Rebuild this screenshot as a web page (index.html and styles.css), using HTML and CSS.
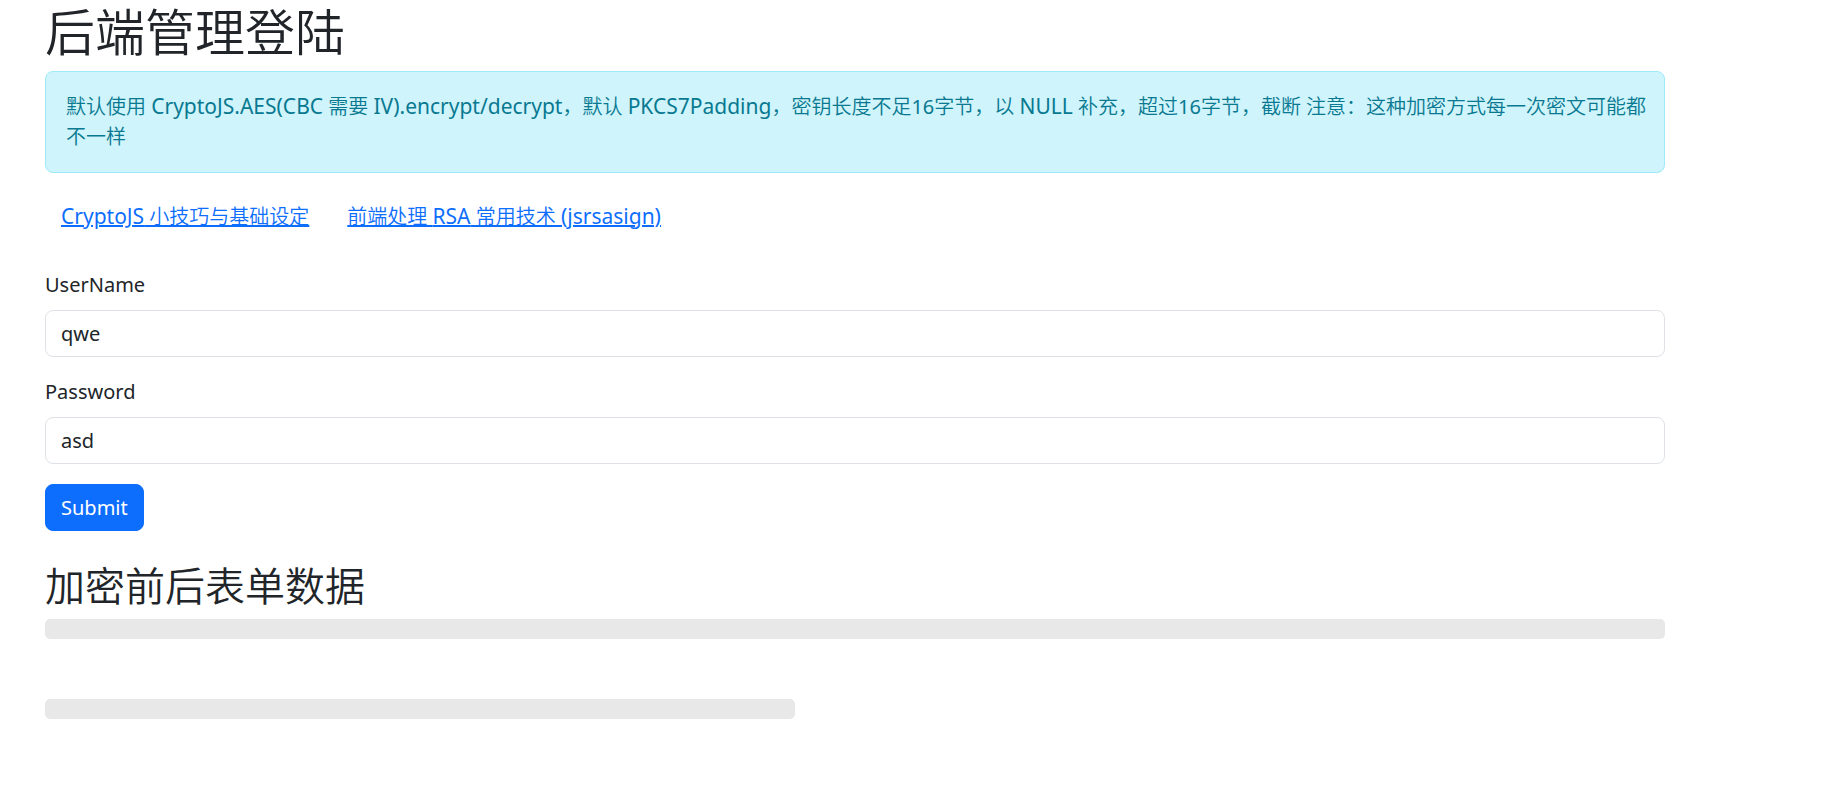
FILE: index.html
```html
<!DOCTYPE html>
<html lang="zh-CN">
<head>
<meta charset="utf-8">
<meta name="viewport" content="width=device-width, initial-scale=1">
<title>后端管理登陆</title>
<link rel="stylesheet" href="styles.css">
</head>
<body>
<main class="container">
  <h1 class="title">后端管理登陆</h1>
  <div class="alert" role="alert">默认使用 <span class="latin">CryptoJS.AES(CBC</span> 需要 <span class="latin">IV).encrypt/decrypt</span>，默认 <span class="latin">PKCS7Padding</span>，密钥长度不足16字节，以 <span class="latin">NULL</span> 补充，超过16字节，截断 注意：这种加密方式每一次密文可能都不一样</div>
  <nav class="links">
    <a class="btn-link" href="#cryptojs"><span class="latin">CryptoJS</span> 小技巧与基础设定</a>
    <a class="btn-link" href="#jsrsasign">前端处理 <span class="latin">RSA</span> 常用技术 <span class="latin">(jsrsasign)</span></a>
  </nav>
  <form class="form">
    <div class="field">
      <label class="label" for="username">UserName</label>
      <input class="control" id="username" type="text" value="qwe">
    </div>
    <div class="field">
      <label class="label" for="password">Password</label>
      <input class="control" id="password" type="text" value="asd">
    </div>
    <button class="btn" type="submit">Submit</button>
  </form>
  <h2 class="subtitle">加密前后表单数据</h2>
  <div class="code"></div>
  <div class="code code-short"></div>
</main>
</body>
</html>
```

FILE: styles.css
```css
*, *::before, *::after {
  box-sizing: border-box;
}

body {
  margin: 0;
  background: #fff;
  color: #212529;
  font-family: "Noto Sans", "Noto Sans CJK SC DemiLight", "Noto Sans CJK SC", sans-serif;
  font-size: 20px;
  line-height: 30px;
}

.container {
  max-width: 1680px;
  padding: 0 15px 40px 45px;
}

.title,
.subtitle {
  margin: 0;
  font-family: "Noto Sans CJK SC DemiLight", "Noto Sans CJK SC", sans-serif;
  font-weight: 350;
}

.title {
  margin-bottom: 13px;
  font-size: 50px;
  line-height: 58px;
}

.subtitle {
  margin-bottom: 12px;
  font-size: 40px;
  line-height: 46px;
}

/* Latin runs inside Chinese sentences */
.latin {
  font-size: 21px;
  line-height: 1;
}

.alert {
  margin-bottom: 20px;
  padding: 20px 16px 20px 20px;
  border: 1px solid #9eeaf9;
  border-radius: 8px;
  background: #cff4fc;
  color: #087990;
}

.links {
  display: flex;
  gap: 6px;
  margin-bottom: 30px;
}

.btn-link {
  padding: 9px 16px 8px;
  color: #0d6efd;
  text-decoration: underline;
}

.field {
  margin-bottom: 20px;
}

.label {
  display: block;
  margin-bottom: 10px;
}

.control {
  display: block;
  width: 100%;
  height: 47px;
  padding: 7px 15px;
  border: 1px solid #dee2e6;
  border-radius: 8px;
  background: #fff;
  color: #212529;
  font: inherit;
}

.btn {
  display: block;
  height: 47px;
  margin-bottom: 30px;
  padding: 7px 15px;
  border: 1px solid #0d6efd;
  border-radius: 8px;
  background: #0d6efd;
  color: #fff;
  font: inherit;
}

.code {
  min-height: 20px;
  margin-bottom: 60px;
  border-radius: 5px;
  background: #e8e8e8;
}

.code-short {
  max-width: 750px;
}
```
